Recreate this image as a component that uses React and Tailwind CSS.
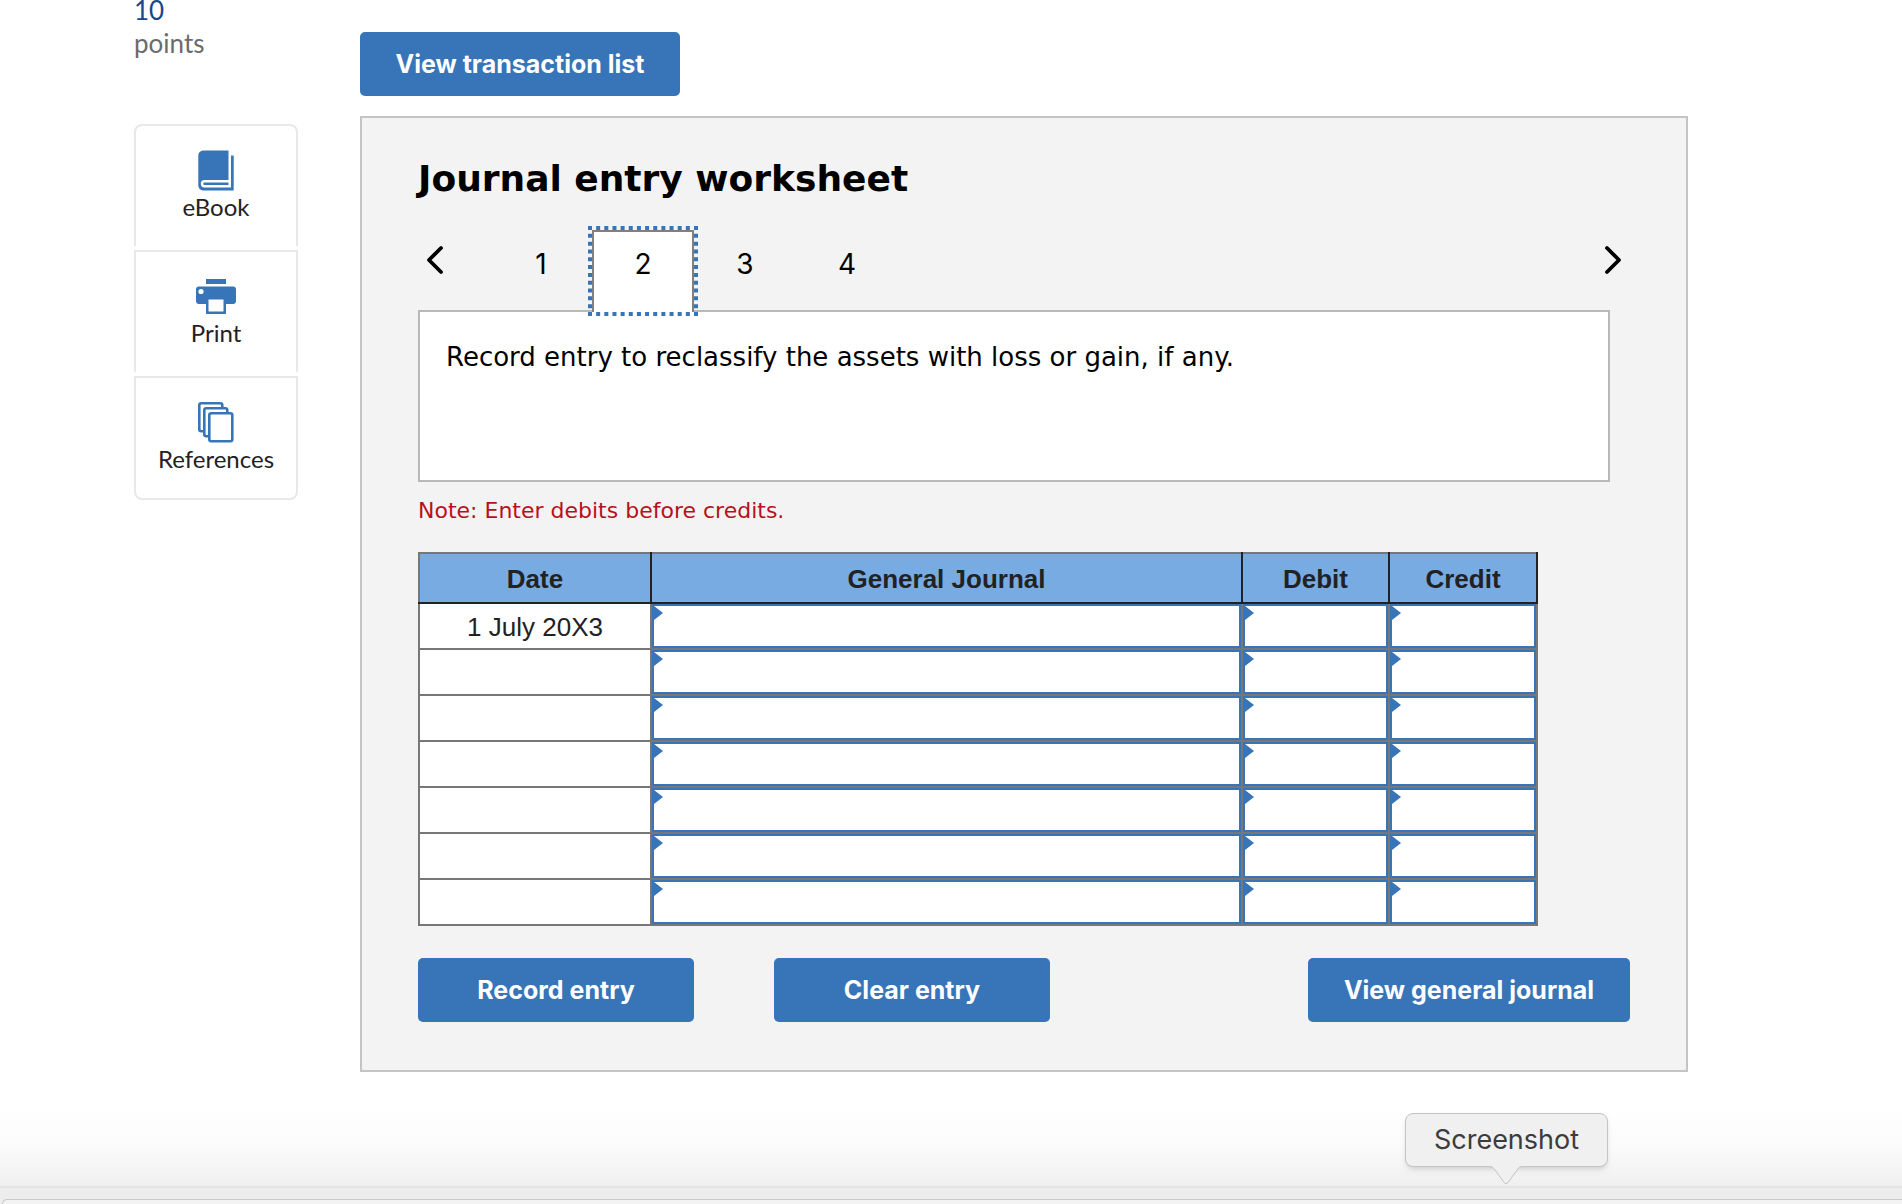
import { useState } from 'react';

const sideLinks = [
  { label: 'eBook', icon: BookIcon, style: 'h-[122px] rounded-t-lg border-x-2 border-t-2' },
  { label: 'Print', icon: PrintIcon, style: 'h-[122px] border-x-2 border-t-2' },
  { label: 'References', icon: PagesIcon, style: 'h-[124px] rounded-b-lg border-2' }
];

const dates = ['1 July 20X3', '', '', '', '', '', ''];

function BookIcon() {
  return (
    <svg className="h-11 w-10" viewBox="0 0 40 44" fill="#3774b8">
      <path d="M7 2.500H32.500V32H8.500a3.700 3.700 0 0 0 0 7.400H35V7.500H37.700V42.500H7A5 5 0 0 1 2.300 37.500V7.500A5 5 0 0 1 7 2.500Z" />
      <path d="M8.500 34.500H32.500V37H8.500a1.250 1.250 0 0 1 0-2.500Z" />
    </svg>
  );
}

function PrintIcon() {
  return (
    <svg className="h-11 w-10" viewBox="0 0 40 44" fill="#3774b8">
      <path d="M10 5H30V10H10Z" />
      <path d="M3 12.500H37a3 3 0 0 1 3 3V27a3 3 0 0 1-3 3H30V40H10V30H3a3 3 0 0 1-3-3V15.500a3 3 0 0 1 3-3Z" />
      <path fill="#fff" d="M12.500 25.500H27.500V37.500H12.500Z" />
      <circle cx="5" cy="17.500" r="2.600" fill="#fff" />
    </svg>
  );
}

function PagesIcon() {
  return (
    <svg className="h-11 w-10" viewBox="0 0 40 44" fill="#fff" stroke="#3774b8" strokeWidth="2.600">
      <rect x="3.300" y="3.300" width="23" height="28" rx="2" />
      <rect x="8.300" y="8.300" width="23" height="28" rx="2" />
      <rect x="13.300" y="13.300" width="23" height="28" rx="2" />
    </svg>
  );
}

function Chevron({ points }) {
  return (
    <svg
      className="h-8 w-5"
      viewBox="0 0 20 32"
      fill="none"
      stroke="#000"
      strokeWidth="3.800"
      strokeLinecap="round"
      strokeLinejoin="round"
    >
      <polyline points={points} />
    </svg>
  );
}

// square-dotted ring round the selected step
function FocusRing() {
  return (
    <svg
      className="pointer-events-none absolute -top-1 -left-1 h-[90px] w-[110px]"
      viewBox="0 0 110 90"
      stroke="#3774b8"
      strokeWidth="4"
    >
      <path d="M0 2H110M0 88H110" strokeDasharray="4 4.154" />
      <path d="M2 0V90M108 0V90" strokeDasharray="4 3.818" />
    </svg>
  );
}

function Button({ className, children }) {
  return (
    <button
      type="button"
      className={`h-16 cursor-pointer rounded-[5px] bg-[#3774b8] pt-0.5 font-[Inter,sans-serif] text-[25px] font-bold text-white ${className}`}
    >
      {children}
    </button>
  );
}

function EntryCell({ label }) {
  return (
    <td className="border-2 border-[#777] bg-white p-0">
      <div className="relative">
        <input
          type="text"
          aria-label={label}
          className="block h-11 w-full border-2 border-[#3774b8] px-4 text-[26px] outline-none"
        />
        <svg className="absolute top-0.5 left-0.5 h-3.5 w-[9px]" viewBox="0 0 9 14" fill="#3774b8">
          <path d="M0 0L9 7L0 14Z" />
        </svg>
      </div>
    </td>
  );
}

const Sidebar = () => (
  <aside className="w-[164px] shrink-0 font-[Lato,sans-serif]">
    <div className="h-7 text-[26px] leading-5 text-[#17478a]">10</div>
    <div className="h-8 text-[26px] leading-[30px] text-[#6b6b6b]">points</div>
    <nav className="mt-16 flex flex-col gap-1">
      {sideLinks.map(({ label, icon: Icon, style }) => (
        <a
          key={label}
          href="#"
          className={`flex flex-col items-center border-[#e8e8e8] pt-[22px] text-2xl leading-[30px] text-[#222] ${style}`}
        >
          <Icon />
          {label}
        </a>
      ))}
    </nav>
  </aside>
);

const Steps = ({ step, setStep }) => (
  <div className="relative mt-[30px] flex h-20 justify-between">
    <div className="flex">
      <button type="button" aria-label="Previous" className="flex w-[72px] cursor-pointer pt-3.5 pl-[7px]">
        <Chevron points="16,4 4,16 16,28" />
      </button>
      {[1, 2, 3, 4].map((n) => (
        <button
          key={n}
          type="button"
          onClick={() => setStep(n)}
          className={`relative flex h-[82px] w-[102px] cursor-pointer justify-center border-x-2 border-t-2 pt-[14px] font-[Inter,sans-serif] text-[28px] leading-9 outline-none ${
            n === step ? 'z-10 border-[#808080] bg-white' : 'border-transparent'
          }`}
        >
          {n}
          {n === step && (
            <span className="absolute -top-0.5 -left-0.5">
              <FocusRing />
            </span>
          )}
        </button>
      ))}
    </div>
    <button type="button" aria-label="Next" className="flex cursor-pointer pt-3.5 pr-[7px]">
      <Chevron points="4,4 16,16 4,28" />
    </button>
  </div>
);

const JournalTable = () => (
  <table className="w-full table-fixed border-collapse font-['Liberation_Sans',sans-serif] text-[26px] leading-8 text-[#222]">
    <colgroup>
      <col className="w-[232px]" />
      <col />
      <col className="w-[147px]" />
      <col className="w-[148px]" />
    </colgroup>
    <thead>
      <tr className="h-[50px]">
        {['Date', 'General Journal', 'Debit', 'Credit'].map((name) => (
          <th
            key={name}
            className="border-2 border-[#222] border-t-[#777] bg-[#78abe2] p-0 pt-0.5 font-bold first:border-l-[#777]"
          >
            {name}
          </th>
        ))}
      </tr>
    </thead>
    <tbody>
      {dates.map((date, i) => (
        <tr key={i} className="h-[46px]">
          <td className="border-2 border-[#777] bg-white p-0 pt-0.5 text-center">{date}</td>
          <EntryCell label={`General journal, row ${i + 1}`} />
          <EntryCell label={`Debit, row ${i + 1}`} />
          <EntryCell label={`Credit, row ${i + 1}`} />
        </tr>
      ))}
    </tbody>
  </table>
);

const Dock = () => (
  <footer className="relative mt-auto">
    <div className="h-20 border-b-2 border-[#e4e4e4] bg-linear-to-b from-white via-[#fbfbfb] to-[#efefef]" />
    <div className="h-4 bg-[#ededed] pt-[11px] pl-0.5">
      <div className="flex h-[5px] rounded-tl-lg border-t border-l border-[#c8c8c8] bg-[#f3f3f3]" />
    </div>
    <div className="absolute right-[294px] bottom-[37px] h-[54px] w-[203px] rounded-lg border border-[#c4c4c4] bg-[#f0f0f0] text-center font-[Inter,sans-serif] text-[27px] leading-[52px] text-[#3c3c3c] shadow-md">
      Screenshot
      <svg className="absolute top-[51px] left-[82px] h-5 w-9" viewBox="0 0 36 20" fill="#f0f0f0">
        <path d="M0 0H36V1C32 1 31 2 29 5L20 17.500Q18 20 16 17.500L7 5C5 2 4 1 0 1Z" />
        <path d="M0 1.500C4 1.500 5 2 7 5L16 17.500Q18 20 20 17.500L29 5C31 2 32 1.500 36 1.500" stroke="#c4c4c4" />
      </svg>
    </div>
  </footer>
);

const App = () => {
  const [step, setStep] = useState(2);

  return (
    <div className="flex min-h-screen flex-col bg-white">
      <div className="flex gap-[62px] pr-[214px] pl-[134px]">
        <Sidebar />
        <main className="min-w-0 flex-1 pt-8">
          <Button className="block w-80">View transaction list</Button>
          <section className="mt-5 border-2 border-[#c4c4c4] bg-[#f3f3f3] px-14 pt-10 pb-12 font-['DejaVu_Sans',sans-serif] text-black">
            <h1 className="text-4xl leading-[42px] font-bold">Journal entry worksheet</h1>
            <Steps step={step} setStep={setStep} />
            <div className="mr-5 h-[172px] border-2 border-[#b8b8b8] bg-white px-[26px] py-7 text-[26px] leading-[34px]">
              Record entry to reclassify the assets with loss or gain, if any.
            </div>
            <p className="mt-3 text-[22px] leading-[34px] text-[#b8101a]">Note: Enter debits before credits.</p>
            <div className="mt-6 mr-[92px]">
              <JournalTable />
            </div>
            <div className="mt-8 flex">
              <Button className="w-[276px]">Record entry</Button>
              <Button className="ml-20 w-[276px]">Clear entry</Button>
              <Button className="ml-auto w-[322px]">View general journal</Button>
            </div>
          </section>
        </main>
      </div>
      <Dock />
    </div>
  );
};

export default App;
